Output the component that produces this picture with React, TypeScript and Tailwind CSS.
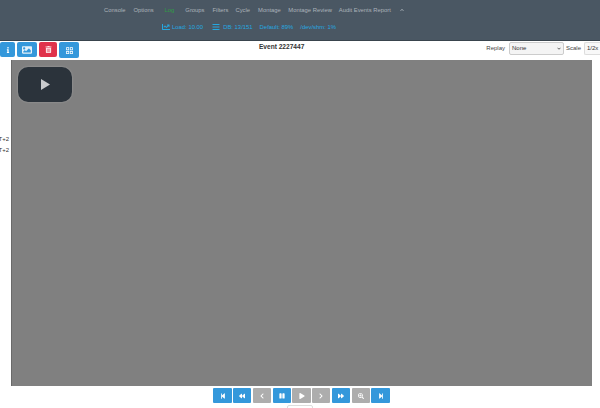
import React from "react"
import { FaInfo, FaImage, FaTrashAlt, FaStepBackward, FaBackward, FaChevronLeft, FaPause, FaPlay, FaChevronRight, FaForward, FaSearchPlus, FaStepForward, FaBars, FaChartLine, FaChevronUp } from "react-icons/fa"
import { MdGridView } from "react-icons/md"

const navItems = [
    { label: "Console", cls: "ml-[104px]" },
    { label: "Options", cls: "ml-[8px]" },
    { label: "Log", cls: "ml-[11px] text-[#2f9e44]" },
    { label: "Groups", cls: "ml-[11px]" },
    { label: "Filters", cls: "ml-[8px]" },
    { label: "Cycle", cls: "ml-[7px]" },
    { label: "Montage", cls: "ml-[8px]" },
    { label: "Montage Review", cls: "ml-[7.5px]" },
    { label: "Audit Events Report", cls: "ml-[7px]" },
]

const controls = [
    { icon: FaStepBackward, on: true },
    { icon: FaBackward, on: true },
    { icon: FaChevronLeft, on: false },
    { icon: FaPause, on: true },
    { icon: FaPlay, on: false },
    { icon: FaChevronRight, on: false },
    { icon: FaForward, on: true },
    { icon: FaSearchPlus, on: false },
    { icon: FaStepForward, on: true },
]

export default function App() {
    return (
        <div className="h-[408px] w-[600px] overflow-hidden bg-white font-['Liberation_Sans',sans-serif] text-[#333]">
            {/* Header */}
            <div className="h-[41px] border-b border-[#39444d] bg-[#4a5763]">
                <div className="flex h-[19px] items-center whitespace-nowrap pt-[1px] text-[5.85px] text-[#abb3ba]">
                    {navItems.map(n => (
                        <span key={n.label} className={n.cls}>{n.label}</span>
                    ))}
                    <FaChevronUp className="ml-[9px] text-[4px]" />
                </div>
                <div className="mt-[1px] flex h-[14px] items-center whitespace-nowrap pl-[162px] text-[5.9px] text-[#25a8e0]">
                    <FaChartLine className="text-[8px]" />
                    <span className="ml-[2px]">Load: 10.00</span>
                    <FaBars className="ml-[9px] text-[8px]" />
                    <span className="ml-[3px]">DB: 13/151</span>
                    <span className="ml-[7px]">Default: 89%</span>
                    <span className="ml-[7px]">/dev/shm: 1%</span>
                </div>
            </div>

            {/* Toolbar */}
            <div className="relative flex h-[19px] items-start pt-[1px]">
                <div className="flex gap-[2px]">
                    <button className="flex h-[15px] w-[15px] items-center justify-center rounded-[2px] bg-[#3498db] text-[6px] text-white"><FaInfo /></button>
                    <button className="flex h-[15px] w-[20px] items-center justify-center rounded-[2px] bg-[#3498db] text-[10px] text-[#e3f1fa]"><FaImage /></button>
                    <button className="flex h-[15px] w-[18px] items-center justify-center rounded-[2px] bg-[#e0324b] text-[7px] text-[#fbe3e6]"><FaTrashAlt /></button>
                    <button className="flex h-[16px] w-[20px] items-center justify-center rounded-[2px] bg-[#3498db] text-[9px] text-white"><MdGridView /></button>
                </div>
                <div className="flex-1 pr-[2px] text-center text-[6.6px] font-bold leading-[10px] text-[#333]">Event 2227447</div>
                <div className="flex items-center text-[6px] text-[#444]">
                    <span>Replay</span>
                    <div className="ml-[4px] flex h-[13px] w-[55px] items-center justify-between rounded-[2px] border border-[#ccc] bg-[#f4f4f4] px-[2px] text-[#333]">
                        None
                        <svg width="4" height="3" viewBox="0 0 5 4" fill="none" stroke="#333" strokeWidth="1"><path d="M0.5 1 L2.5 3 L4.5 1" /></svg>
                    </div>
                    <span className="ml-[2px]">Scale</span>
                    <div className="ml-[3px] flex h-[13px] w-[16px] items-center overflow-hidden rounded-l-[2px] border-y border-l border-[#ddd] bg-[#f8f8f8] pl-[2px] text-[#333]">1/2x</div>
                </div>
            </div>

            {/* Video */}
            <div className="flex h-[326px]">
                <div className="flex w-[12px] flex-col items-end pt-[74px] text-[6px] leading-[11px] text-[#333]">
                    <span className="whitespace-nowrap pr-[3px]">T+2</span>
                    <span className="whitespace-nowrap pr-[3px]">T+2</span>
                </div>
                <div className="relative w-[580px] bg-[#808080] shadow-[-1px_0_0_#6a6a6a]">
                    <div className="absolute left-[6px] top-[7px] flex h-[35px] w-[54px] items-center justify-center rounded-[10px] bg-[#2b333b] shadow-[0_0_2px_rgba(255,255,255,0.3)]">
                        <svg width="9" height="11" viewBox="0 0 9 11"><path d="M0 0 L9 5.5 L0 11 Z" fill="#c9cbcd" /></svg>
                    </div>
                </div>
            </div>

            {/* Playback controls */}
            <div className="mt-[2px] flex justify-center gap-[1.5px] pl-[3px]">
                {controls.map((c, i) => (
                    <button key={i} className={`flex h-[15px] w-[18.25px] items-center justify-center rounded-[1px] text-[6px] text-white ${c.on ? "bg-[#3498db]" : "bg-[#adadad]"}`}>
                        <c.icon />
                    </button>
                ))}
            </div>
            <div className="mx-auto mt-[2px] h-[4px] w-[26px] rounded-t-[2px] border border-[#ddd] bg-white" />
        </div>
    )
}
